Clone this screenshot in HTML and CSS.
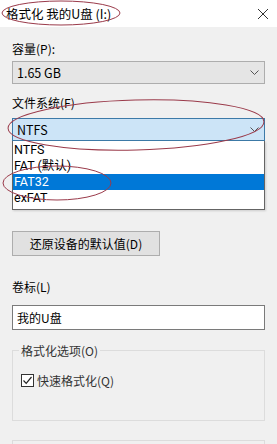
FILE: index.html
```html
<!DOCTYPE html>
<html lang="zh-CN">
<head>
    <meta charset="UTF-8">
    <title>格式化 我的U盘 (I:)</title>
    <link rel="stylesheet" href="styles.css">
</head>
<body>
    <div class="window">
        <div class="titlebar">
            <span class="title">格式化 我的U盘 (I:)</span>
            <svg class="close" width="12" height="12" viewBox="0 0 12 12"><path d="M1 1L11 11M11 1L1 11" stroke="#333" stroke-width="1"/></svg>
        </div>

        <div class="content">
            <div class="label first">容量(P):</div>
            <div class="combo">
                <span>1.65 GB</span>
                <svg class="chevron" width="9" height="6" viewBox="0 0 9 6"><path d="M0.5 0.5L4.5 4.5L8.5 0.5" stroke="#555" fill="none"/></svg>
            </div>

            <div class="label">文件系统(F)</div>
            <div class="combo focused">
                <span>NTFS</span>
                <svg class="chevron" width="9" height="6" viewBox="0 0 9 6"><path d="M0.5 0.5L4.5 4.5L8.5 0.5" stroke="#555" fill="none"/></svg>
            </div>
            <ul class="dropdown">
                <li>NTFS</li>
                <li>FAT (默认)</li>
                <li class="selected">FAT32</li>
                <li>exFAT</li>
            </ul>

            <button class="btn">还原设备的默认值(D)</button>

            <div class="label volume">卷标(L)</div>
            <div class="textbox">我的U盘</div>

            <fieldset class="group">
                <legend>格式化选项(O)</legend>
                <label class="check">
                    <span class="box"><svg width="11" height="11" viewBox="0 0 11 11"><path d="M1.5 5.5L4.2 8.3L9.5 2" stroke="#222" stroke-width="1.2" fill="none"/></svg></span>
                    快速格式化(Q)
                </label>
            </fieldset>

            <div class="bottom-box"></div>
        </div>

        <svg class="marks" width="277" height="444" viewBox="0 0 277 444">
            <ellipse cx="61" cy="13" rx="59" ry="12" fill="none" stroke="#9a3a4a" stroke-width="1"/>
            <ellipse cx="136" cy="125" rx="128" ry="25" transform="rotate(-1.5 136 125)" fill="none" stroke="#9a3a4a" stroke-width="1"/>
            <ellipse cx="57" cy="183" rx="54" ry="17" fill="none" stroke="#9a3a4a" stroke-width="1"/>
        </svg>
    </div>
</body>
</html>
```

FILE: styles.css
```css
body {
    margin: 0;
    font-family: "Noto Sans CJK SC", "Noto Sans", sans-serif;
    font-size: 12px;
    color: #000;
}
.window {
    position: relative;
    width: 277px;
    height: 444px;
    overflow: hidden;
    background-color: #f0f0f0;
}
.titlebar {
    height: 27px;
    background-color: #fff;
    display: flex;
    align-items: center;
    justify-content: space-between;
    padding: 0 8px 0 6px;
}
.title {
    font-size: 12.5px;
}
.content {
    padding: 0 12px;
}
.label {
    margin-top: 10px;
    height: 17px;
    line-height: 17px;
}
.label.first {
    margin-top: 13px;
}
.label.volume {
    margin-top: 22px;
}
.combo {
    margin-top: 4px;
    height: 21px;
    border: 1px solid #adadad;
    background-color: #e5e5e5;
    display: flex;
    align-items: center;
    justify-content: space-between;
    padding: 0 5px 0 4px;
    font-size: 12.5px;
}
.combo.focused {
    margin-top: 7px;
    background-color: #cce4f7;
    border-color: #3d7aa8;
}
.dropdown {
    list-style: none;
    margin: 0;
    padding: 1px 0 3px;
    background-color: #fff;
    border: 1px solid #646464;
    border-top: none;
    box-shadow: 1px 1px 2px rgba(0,0,0,0.15);
}
.dropdown li {
    height: 16px;
    line-height: 16px;
    padding: 0 1px;
    font-family: Roboto, "Noto Sans CJK SC", sans-serif;
    font-size: 12.5px;
}
.dropdown li.selected {
    background-color: #0078d7;
    color: #fff;
}
.btn {
    display: block;
    margin-top: 21px;
    width: 148px;
    height: 25px;
    border: 1px solid #adadad;
    background-color: #e1e1e1;
    font-family: inherit;
    font-size: 12px;
    color: #000;
    padding: 0;
}
.textbox {
    margin-top: 10px;
    height: 23px;
    line-height: 23px;
    border: 1px solid #7a7a7a;
    background-color: #fff;
    padding: 0 4px;
}
.group {
    margin: 12px 0 0;
    height: 79px;
    border: 1px solid #dcdcdc;
    padding: 0 8px;
    box-sizing: border-box;
    color: #333;
}
.group legend {
    padding: 0 2px;
    margin-left: -2px;
    line-height: 17px;
}
.check {
    display: flex;
    align-items: center;
    gap: 3px;
    margin-top: 13px;
}
.box {
    width: 11px;
    height: 11px;
    border: 1px solid #333;
    background-color: #fff;
    display: flex;
}
.bottom-box {
    margin-top: 19px;
    height: 20px;
    border: 1px solid #dcdcdc;
}
.marks {
    position: absolute;
    top: 0;
    left: 0;
}
```
